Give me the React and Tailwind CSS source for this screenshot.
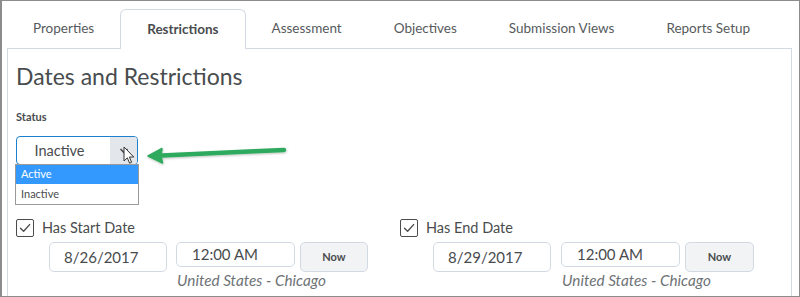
import React from "react";

const tabs = ["Properties", "Restrictions", "Assessment", "Objectives", "Submission Views", "Reports Setup"];

function Checkbox() {
  return (
    <div className="w-[18px] h-[18px] border-[1.5px] border-[#4a4c4e] rounded-[2px] bg-white flex items-center justify-center">
      <svg width="14" height="14" viewBox="0 0 14 14" fill="none">
        <path d="M2.5 7.2 L5.6 10.3 L11.6 3.6" stroke="#4a4c4e" strokeWidth="1.4" strokeLinecap="round" strokeLinejoin="round" />
      </svg>
    </div>
  );
}

function DateBlock({ label, date, gapA, nowW }) {
  return (
    <div className="flex flex-col">
      <div className="flex items-center h-[18px]">
        <Checkbox />
        <span className="ml-[8px] text-[14.5px] text-[#494c4e] leading-none">{label}</span>
      </div>
      <div className="flex mt-[5px] ml-[33px] h-[30px]">
        <div className="w-[118px] h-[30px] shrink-0 border border-[#d3d9e3] rounded-[5px] flex items-center pl-[14px] text-[15px] text-[#494c4e]">{date}</div>
        <div className={gapA + " w-[119px] shrink-0 flex flex-col"}>
          <div className="w-[119px] h-[30px] border border-[#d3d9e3] rounded-[5px] flex items-center pl-[15px] text-[15px] text-[#494c4e]">12:00 AM</div>
          <div className="mt-[6px] ml-[1px] text-[15.3px] italic text-[#6e7376] whitespace-nowrap leading-none">United States - Chicago</div>
        </div>
        <div className={"ml-[5px] h-[30px] shrink-0 border border-[#d3d9e3] rounded-[5px] bg-[#f1f3f5] flex items-center justify-center text-[11px] font-bold text-[#494c4e] " + nowW}>Now</div>
      </div>
    </div>
  );
}

export default function App() {
  return (
    <div className="w-[800px] h-[297px] bg-white border border-l-2 border-[#8c8c8c] relative overflow-hidden font-['Lato',sans-serif]">
      <div className="pl-[5px] pt-[7px] pr-[7px]">
        {/* tabs */}
        <div className="flex h-[40px] items-stretch">
          {tabs.map((t) =>
            t === "Restrictions" ? (
              <div key={t} className="shrink-0 whitespace-nowrap px-[26px] border border-b-0 border-[#d3d9e3] rounded-t-[6px] bg-white flex items-center justify-center text-[13.5px] font-bold text-[#494c4e] relative top-[1px] z-10">
                {t}
              </div>
            ) : (
              <div key={t} className="shrink-0 whitespace-nowrap px-[26px] flex items-center justify-center text-[13.5px] text-[#565a5c]">
                {t}
              </div>
            )
          )}
        </div>
        {/* panel */}
        <div className="border border-[#d3d9e3] border-b-0 h-[260px] pl-[8px] pt-[12px] relative">
          <h1 className="text-[23px] leading-[30px] text-[#494c4e] font-normal">Dates and Restrictions</h1>
          <div className="mt-[20px] text-[11px] font-bold text-[#494c4e] leading-none">Status</div>
          <div className="relative mt-[14px] w-[122px]">
            <div className="h-[29px] border border-[#1e7fcc] rounded-[4px] flex overflow-hidden">
              <div className="flex-1 flex items-center justify-center text-[14.5px] text-[#494c4e] pr-[8px]">Inactive</div>
              <div className="w-[27px] bg-[#e3e6ea] flex items-center justify-center">
                <svg width="10" height="8" viewBox="0 0 10 8" fill="none">
                  <path d="M1.5 2 L5 5.5 L8.5 2" stroke="#494c4e" strokeWidth="1.6" />
                </svg>
              </div>
            </div>
            <div className="absolute left-[-1px] top-[28px] w-[124px] border border-[#9a9a9a] bg-white z-20">
              <div className="h-[19px] bg-[#3399ff] text-white text-[11px] flex items-center pl-[5px]">Active</div>
              <div className="h-[20px] bg-white text-[#494c4e] text-[11px] flex items-center pl-[5px]">Inactive</div>
            </div>
          </div>
          <div className="grid grid-cols-[384px_1fr] mt-[54px]">
            <DateBlock label="Has Start Date" date="8/26/2017" gapA="ml-[9px]" nowW="w-[68px]" />
            <DateBlock label="Has End Date" date="8/29/2017" gapA="ml-[10px]" nowW="w-[69px]" />
          </div>
        </div>
      </div>

      {/* green arrow annotation */}
      <svg className="absolute left-[140px] top-[138px] z-30" width="150" height="30" viewBox="0 0 150 30">
        <defs>
          <filter id="sh" x="-10%" y="-50%" width="120%" height="200%">
            <feDropShadow dx="0.5" dy="1" stdDeviation="0.8" floodColor="#000" floodOpacity="0.25" />
          </filter>
        </defs>
        <g filter="url(#sh)">
          <path d="M20 16.5 L142 11" stroke="#2eaa5e" strokeWidth="4.5" strokeLinecap="round" />
          <path d="M6 17 L20 9.5 L19 16.7 L20.5 24 Z" fill="#2eaa5e" stroke="#2eaa5e" strokeWidth="1.5" strokeLinejoin="round" />
        </g>
      </svg>

      {/* mouse cursor */}
      <svg className="absolute left-[121px] top-[145px] z-30" width="12" height="19" viewBox="0 0 12 19">
        <path d="M1 1 L1 15 L4.3 11.8 L6.6 17.2 L8.6 16.3 L6.4 11 L10.8 11 Z" fill="white" stroke="#333" strokeWidth="1" strokeLinejoin="round" />
      </svg>
    </div>
  );
}
